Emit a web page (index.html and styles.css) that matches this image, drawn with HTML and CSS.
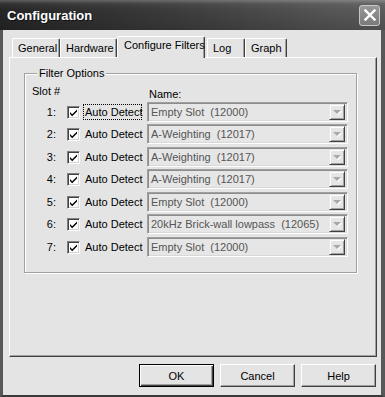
FILE: index.html
```html
<!DOCTYPE html>
<html lang="en">
<head>
    <meta charset="UTF-8">
    <title>Configuration</title>
    <link rel="stylesheet" href="styles.css">
</head>
<body>
    <div class="window">
        <div class="titlebar">
            <span class="title">Configuration</span>
            <span class="close">
                <svg width="12" height="12" viewBox="0 0 12 12"><path d="M1.5 1.5 L10.5 10.5 M10.5 1.5 L1.5 10.5" stroke="#fff" stroke-width="2.4" stroke-linecap="square"/></svg>
            </span>
        </div>
        <div class="client">
            <div class="tabs">
                <div class="tab tab-general">General</div>
                <div class="tab tab-hardware">Hardware</div>
                <div class="tab tab-filters selected">Configure Filters</div>
                <div class="tab tab-log">Log</div>
                <div class="tab tab-graph">Graph</div>
            </div>
            <div class="panel">
                <fieldset class="group">
                    <legend>Filter Options</legend>
                    <div class="head">
                        <span class="slot-head">Slot #</span>
                        <span class="name-head">Name:</span>
                    </div>
                    <div class="rows">
                        <div class="row"><span class="num">1:</span><span class="check"><svg width="9" height="9" viewBox="0 0 9 9"><path d="M1 4 L3.2 6.3 L8 1.5 L8 3.5 L3.2 8.3 L1 6 Z" fill="#000"/></svg></span><span class="label focus">Auto Detect</span><span class="combo"><span class="value">Empty Slot  (12000)</span><span class="drop"><i></i></span></span></div>
                        <div class="row"><span class="num">2:</span><span class="check"><svg width="9" height="9" viewBox="0 0 9 9"><path d="M1 4 L3.2 6.3 L8 1.5 L8 3.5 L3.2 8.3 L1 6 Z" fill="#000"/></svg></span><span class="label">Auto Detect</span><span class="combo"><span class="value">A-Weighting  (12017)</span><span class="drop"><i></i></span></span></div>
                        <div class="row"><span class="num">3:</span><span class="check"><svg width="9" height="9" viewBox="0 0 9 9"><path d="M1 4 L3.2 6.3 L8 1.5 L8 3.5 L3.2 8.3 L1 6 Z" fill="#000"/></svg></span><span class="label">Auto Detect</span><span class="combo"><span class="value">A-Weighting  (12017)</span><span class="drop"><i></i></span></span></div>
                        <div class="row"><span class="num">4:</span><span class="check"><svg width="9" height="9" viewBox="0 0 9 9"><path d="M1 4 L3.2 6.3 L8 1.5 L8 3.5 L3.2 8.3 L1 6 Z" fill="#000"/></svg></span><span class="label">Auto Detect</span><span class="combo"><span class="value">A-Weighting  (12017)</span><span class="drop"><i></i></span></span></div>
                        <div class="row"><span class="num">5:</span><span class="check"><svg width="9" height="9" viewBox="0 0 9 9"><path d="M1 4 L3.2 6.3 L8 1.5 L8 3.5 L3.2 8.3 L1 6 Z" fill="#000"/></svg></span><span class="label">Auto Detect</span><span class="combo"><span class="value">Empty Slot  (12000)</span><span class="drop"><i></i></span></span></div>
                        <div class="row"><span class="num">6:</span><span class="check"><svg width="9" height="9" viewBox="0 0 9 9"><path d="M1 4 L3.2 6.3 L8 1.5 L8 3.5 L3.2 8.3 L1 6 Z" fill="#000"/></svg></span><span class="label">Auto Detect</span><span class="combo"><span class="value">20kHz Brick-wall lowpass  (12065)</span><span class="drop"><i></i></span></span></div>
                        <div class="row"><span class="num">7:</span><span class="check"><svg width="9" height="9" viewBox="0 0 9 9"><path d="M1 4 L3.2 6.3 L8 1.5 L8 3.5 L3.2 8.3 L1 6 Z" fill="#000"/></svg></span><span class="label">Auto Detect</span><span class="combo"><span class="value">Empty Slot  (12000)</span><span class="drop"><i></i></span></span></div>
                    </div>
                </fieldset>
            </div>
            <div class="buttons">
                <button class="btn default">OK</button>
                <button class="btn">Cancel</button>
                <button class="btn">Help</button>
            </div>
        </div>
    </div>
</body>
</html>
```

FILE: styles.css
```css
body {
    margin: 0;
    font-family: "Liberation Sans", Arial, sans-serif;
    font-size: 11px;
    background: #e4e4e4;
}
.window {
    width: 385px;
    height: 397px;
    overflow: hidden;
    background: #e4e4e4;
}
.titlebar {
    height: 30px;
    display: flex;
    align-items: center;
    justify-content: space-between;
    padding: 0 5px 0 7px;
    box-sizing: border-box;
    background:
        linear-gradient(to bottom, rgba(255,255,255,0.25) 0, rgba(255,255,255,0.05) 4px, rgba(0,0,0,0) 10px, rgba(0,0,0,0.15) 30px),
        linear-gradient(to right, #262626, #3c3c3c 45%, #555 85%, #5c5c5c);
}
.title {
    color: #fff;
    font-weight: bold;
    font-size: 13px;
    padding-top: 1px;
    text-shadow: 1px 1px 0 #111;
}
.close {
    width: 19px;
    height: 19px;
    display: flex;
    align-items: center;
    justify-content: center;
    border: 1px solid #c8c8c8;
    border-radius: 3px;
    background: linear-gradient(to bottom, #999, #7a7a7a);
}
.client {
    height: 367px;
    box-sizing: border-box;
    border-left: 3px solid #585858;
    border-right: 4px solid #585858;
    border-bottom: 2px solid #3a3a3a;
    padding: 6px 4px 0 6px;
}
.tabs {
    display: flex;
    align-items: flex-end;
    height: 21px;
    padding-left: 3px;
}
.tab {
    height: 19px;
    box-sizing: border-box;
    padding: 3px 0 0 5px;
    border-top: 1px solid #fff;
    border-left: 1px solid #fff;
    border-right: 1px solid #404040;
    box-shadow: inset -1px 0 0 #a0a0a0;
    border-radius: 2px 2px 0 0;
    white-space: nowrap;
}
.tab-general { width: 48px; }
.tab-hardware { width: 57px; }
.tab-filters { width: 88px; }
.tab-log { width: 38px; margin-left: 2px; }
.tab-graph { width: 42px; }
.tab.selected {
    height: 22px;
    margin-bottom: -1px;
    padding: 2px 0 0 6px;
    background: #e4e4e4;
    position: relative;
    z-index: 1;
}
.panel {
    height: 300px;
    box-sizing: border-box;
    border: 1px solid #404040;
    border-top-color: #fff;
    border-left-color: #fff;
    box-shadow: inset -1px -1px 0 #a0a0a0;
    padding: 9px 0 0 14px;
}
.group {
    width: 333px;
    box-sizing: border-box;
    margin: 0;
    padding: 5px 0 13px 7px;
    border: 1px solid #a0a0a0;
    box-shadow: inset 1px 1px 0 #fff, 1px 1px 0 #fff;
}
.group legend {
    margin-left: 5px;
    padding: 0 2px;
    line-height: 13px;
    background: #e4e4e4;
}
.head {
    display: flex;
    height: 17px;
    line-height: 13px;
}
.slot-head {
    width: 117px;
}
.name-head {
    margin-top: 3px;
}
.row {
    display: flex;
    align-items: center;
    height: 20px;
    padding-bottom: 2px;
}
.row:nth-child(even) {
    padding-bottom: 3px;
}
.num {
    width: 24px;
    text-align: right;
}
.check {
    width: 13px;
    height: 13px;
    box-sizing: border-box;
    margin-left: 11px;
    display: flex;
    align-items: center;
    justify-content: center;
    background: #fff;
    border: 1px solid #fff;
    border-top-color: #808080;
    border-left-color: #808080;
    box-shadow: inset 1px 1px 0 #404040, inset -1px -1px 0 #d4d4d4;
}
.label {
    width: 59px;
    height: 16px;
    box-sizing: border-box;
    margin-left: 3px;
    padding: 1px 0 0 1px;
    white-space: nowrap;
    border: 1px solid transparent;
}
.label.focus {
    border: 1px dotted #000;
}
.combo {
    width: 201px;
    height: 20px;
    box-sizing: border-box;
    margin-left: 5px;
    display: flex;
    align-items: center;
    justify-content: space-between;
    border: 1px solid #fff;
    border-top-color: #a0a0a0;
    border-left-color: #a0a0a0;
    box-shadow: inset 1px 1px 0 #8c8c8c, inset -1px -1px 0 #d8d8d8;
    padding: 0 2px 0 3px;
    background: #e6e6e6;
}
.value {
    white-space: pre;
    color: #555;
}
.drop {
    width: 16px;
    height: 16px;
    box-sizing: border-box;
    display: flex;
    align-items: center;
    justify-content: center;
    border: 1px solid #404040;
    border-top-color: #e8e8e8;
    border-left-color: #e8e8e8;
    box-shadow: inset 1px 1px 0 #fff, inset -1px -1px 0 #a0a0a0;
}
.drop i {
    width: 0;
    height: 0;
    border-left: 4px solid transparent;
    border-right: 4px solid transparent;
    border-top: 4px solid #a8a8a8;
    filter: drop-shadow(1px 1px 0 #fff);
}
.buttons {
    display: flex;
    justify-content: flex-end;
    gap: 6px;
    margin-top: 7px;
    padding-right: 1px;
}
.btn {
    width: 75px;
    height: 23px;
    margin: 0;
    padding: 0;
    font-family: "Liberation Sans", Arial, sans-serif;
    font-size: 11px;
    color: #000;
    background: #e4e4e4;
    border: 1px solid #404040;
    border-top-color: #fff;
    border-left-color: #fff;
    box-shadow: inset -1px -1px 0 #a0a0a0;
}
.btn.default {
    border: 1px solid #000;
    box-shadow: inset 1px 1px 0 #fff, inset -1px -1px 0 #404040, inset -2px -2px 0 #a0a0a0;
}
```
